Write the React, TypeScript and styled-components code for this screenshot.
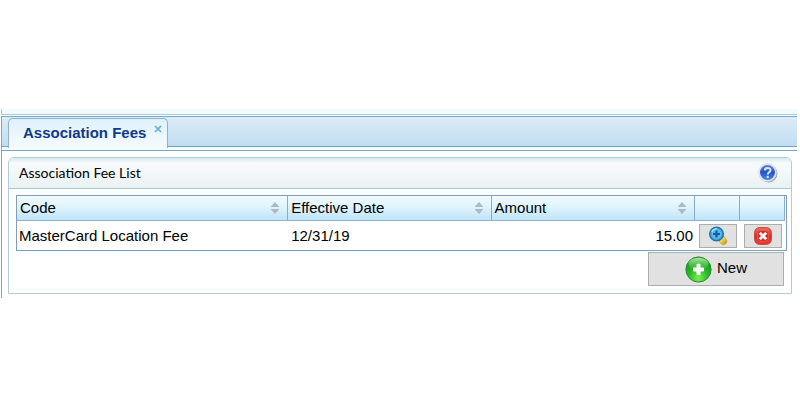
import React from "react";
import styled, { createGlobalStyle } from "styled-components";

const GlobalStyle = createGlobalStyle`
  *, *::before, *::after { box-sizing: border-box; }
  body {
    margin: 0;
    background: #fff;
    color: #000;
    font: 15px/18px "Liberation Sans", Arial, sans-serif;
  }
`;

const Page = styled.main`
  padding: 109px 3px 0 1px;
`;

const UpperPane = styled.div`
  height: 6px;
  margin-bottom: 1px;
  background: #f0faff;
  border-left: 1px solid #a3cbd9;
  border-bottom: 1px solid #a3cbd9;
`;

const TabPanel = styled.section`
  border: 1px solid #7ba7c7;
  border-width: 1px 0 0 1px;
`;

const TabStrip = styled.div`
  display: flex;
  height: 30px;
  padding: 1px 6px 0;
  background: linear-gradient(#dcebf7, #c0def1);
  border-bottom: 1px solid #6ea3c9;
`;

const Tab = styled.div`
  display: flex;
  align-items: flex-start;
  gap: 8px;
  height: 30px;
  padding: 0 5px 0 14px;
  background: linear-gradient(#dff1fd, #f5fbff);
  border: 1px solid #8db2ca;
  border-bottom: 0;
  border-radius: 5px 5px 0 0;
`;

const TabLabel = styled.button`
  padding: 5px 0;
  border: 0;
  background: none;
  color: #103a87;
  font: bold 15px/18px "Liberation Sans", Arial, sans-serif;
`;

const CloseButton = styled.button`
  display: flex;
  padding: 6px 0 0;
  border: 0;
  background: none;
`;

const StripFoot = styled.div`
  height: 4px;
  background: #f5fbff;
  border-bottom: 1px solid #7ba7c7;
`;

const TabBody = styled.div`
  padding: 6px 5px 4px 6px;
`;

const Panel = styled.section`
  border: 1px solid #b0cad6;
  border-radius: 6px 6px 0 0;
`;

const PanelHeader = styled.header`
  display: flex;
  align-items: center;
  justify-content: space-between;
  height: 31px;
  padding: 0 13px 0 10px;
  background: linear-gradient(#d9eaed, #f6fafb 5px, #f5f9fa 12px, #e9f1f3);
  border-bottom: 1px solid #a9c8d5;
  border-radius: 5px 5px 0 0;
`;

const PanelTitle = styled.h2`
  margin: 0;
  font: 14px/18px Lato, sans-serif;
`;

const HelpButton = styled.button`
  display: flex;
  padding: 0;
  border: 0;
  background: none;
`;

const PanelBody = styled.div`
  display: flex;
  flex-direction: column;
  align-items: flex-end;
  padding: 6px 4px 7px 7px;
`;

const TableFrame = styled.div`
  width: 100%;
  padding-right: 1px;
  border: 1px solid #7e9dc0;
`;

const Table = styled.table`
  width: 100%;
  table-layout: fixed;
  border-collapse: separate;
  border-spacing: 0;
`;

const Column = styled.col<{ $width: string }>`
  width: ${(p) => p.$width};
`;

const HeadCell = styled.th`
  height: 25px;
  padding: 0 7px 0 3px;
  background: linear-gradient(#f0fbff, #dff4fe 45%, #bfe3f8);
  border-right: 1px solid #8aa9cb;
  border-bottom: 1px solid #8eafcd;
  font-weight: normal;
  text-align: left;
`;

const HeadContent = styled.div`
  display: flex;
  align-items: center;
  justify-content: space-between;
`;

const Cell = styled.td<{ $align?: "right" | "center" }>`
  height: 29px;
  padding: ${(p) => (p.$align === "center" ? "0" : "0 2px")};
  text-align: ${(p) => p.$align ?? "left"};
`;

const DateCell = styled(Cell)`
  padding-left: 3px;
`;

const RowButton = styled.button`
  display: flex;
  align-items: center;
  justify-content: center;
  width: 38px;
  height: 24px;
  margin: 0 auto;
  padding: 0;
  background: #e1e1e1;
  border: 1px solid #adadad;
`;

const NewButton = styled.button`
  display: flex;
  align-items: center;
  justify-content: center;
  gap: 5px;
  width: 136px;
  height: 34px;
  margin: 1px 3px 0 0;
  padding: 0;
  background: #e1e1e1;
  border: 1px solid #adadad;
  color: #000;
  font: 15px/18px "Liberation Sans", Arial, sans-serif;
`;

const NewLabel = styled.span`
  padding-bottom: 2px;
`;

const SortIcon = () => (
  <svg width="10" height="12" viewBox="0 0 10 12" aria-hidden="true">
    <path d="M5 0 9.500 5H.5zM.5 7h9L5 12z" fill="#adb9c8" />
  </svg>
);

const CloseIcon = () => (
  <svg width="8" height="8" viewBox="0 0 8 8" aria-hidden="true">
    <path d="M1 1l6 6M7 1L1 7" stroke="#63aedb" strokeWidth="1.7" />
  </svg>
);

const HelpIcon = () => (
  <svg width="20" height="20" viewBox="0 0 20 20" aria-hidden="true">
    <defs>
      <linearGradient id="helpBlue" x2="0" y2="1">
        <stop stopColor="#557fdd" />
        <stop offset=".5" stopColor="#2457c5" />
        <stop offset="1" stopColor="#4285ed" />
      </linearGradient>
    </defs>
    <circle cx="10.500" cy="10.500" r="9" fill="#9ca2a9" />
    <circle cx="9.500" cy="9.500" r="9" fill="#e6ebf2" stroke="#cbd3df" strokeWidth=".6" />
    <circle cx="9.500" cy="9.500" r="7.500" fill="url(#helpBlue)" />
    <path d="M6.800 7.400C7 4.100 12.600 4.200 12.500 7.200c0 2-2.800 2-2.800 4.200" fill="none" stroke="#dce5f8" strokeWidth="2" />
    <circle cx="9.700" cy="13.900" r="1.200" fill="#dce5f8" />
  </svg>
);

const ViewIcon = () => (
  <svg width="20" height="20" viewBox="0 0 20 20" aria-hidden="true">
    <defs>
      <radialGradient id="lens">
        <stop stopColor="#3ba4e0" />
        <stop offset=".6" stopColor="#62c0ee" />
        <stop offset="1" stopColor="#2381c4" />
      </radialGradient>
      <linearGradient id="handle" x2="1" y2="1">
        <stop stopColor="#fff08b" />
        <stop offset=".5" stopColor="#f2cf38" />
        <stop offset="1" stopColor="#b18720" />
      </linearGradient>
    </defs>
    <path d="M10.500 14.500l5-4.500 2.800 3.500c2 3-2.300 7-5 4.500z" fill="url(#handle)" stroke="#ba962e" strokeWidth=".6" />
    <path d="M10.500 14.500l5-4.500" stroke="#7d8288" strokeWidth="1.200" />
    <circle cx="8.500" cy="8" r="6.900" fill="url(#lens)" stroke="#2374b0" strokeWidth="1.300" />
    <path d="M8.500 4.500v7M5 8h7" stroke="#125f9d" strokeWidth="2.200" />
    <path d="M3.800 6c1-2.300 3-3.400 5-3.400" fill="none" stroke="#a9e2fa" strokeWidth="1.200" />
  </svg>
);

const DeleteIcon = () => (
  <svg width="18" height="18" viewBox="0 0 18 18" aria-hidden="true">
    <defs>
      <linearGradient id="deleteRed" x2="0" y2="1">
        <stop stopColor="#f46d5b" />
        <stop offset=".5" stopColor="#da3029" />
        <stop offset="1" stopColor="#e93c32" />
      </linearGradient>
    </defs>
    <rect x=".6" y=".6" width="16.800" height="16.800" rx="5" fill="url(#deleteRed)" stroke="#c5453c" />
    <rect x="3.800" y="3.800" width="10.400" height="10.400" rx="2" fill="#c9231f" stroke="#ee695a" strokeWidth=".8" />
    <path d="M5.700 5.700l6.600 6.600M12.300 5.700l-6.600 6.600" stroke="#fff0eb" strokeWidth="3" />
  </svg>
);

const AddIcon = () => (
  <svg width="27" height="27" viewBox="0 0 27 27" aria-hidden="true">
    <defs>
      <radialGradient id="addGreen" cx=".5" cy=".85" r=".8">
        <stop stopColor="#7bed55" />
        <stop offset=".5" stopColor="#28b926" />
        <stop offset="1" stopColor="#11941b" />
      </radialGradient>
      <linearGradient id="addShine" x2="0" y2="1">
        <stop stopColor="#c9f5c0" stopOpacity=".85" />
        <stop offset="1" stopColor="#54cc48" stopOpacity=".2" />
      </linearGradient>
    </defs>
    <circle cx="13.500" cy="13.500" r="12.600" fill="url(#addGreen)" stroke="#2c8c30" />
    <ellipse cx="13.500" cy="8" rx="10" ry="6.200" fill="url(#addShine)" />
    <path d="M12.500 7.800h2q1 0 1 1v2.700H18q1 0 1 1v2q0 1-1 1h-2.500v2.700q0 1-1 1h-2q-1 0-1-1v-2.700H9q-1 0-1-1v-2q0-1 1-1h2.500V8.800q0-1 1-1z" fill="#fff" />
  </svg>
);

const columns = ["Code", "Effective Date", "Amount"];
const fees = [{ code: "MasterCard Location Fee", date: "12/31/19", amount: "15.00" }];

export default function App() {
  return (
    <>
      <GlobalStyle />
      <Page>
        <UpperPane />
        <TabPanel>
          <TabStrip>
            <Tab>
              <TabLabel type="button">Association Fees</TabLabel>
              <CloseButton type="button" aria-label="Close tab"><CloseIcon /></CloseButton>
            </Tab>
          </TabStrip>
          <StripFoot />
          <TabBody>
            <Panel>
              <PanelHeader>
                <PanelTitle>Association Fee List</PanelTitle>
                <HelpButton type="button" aria-label="Help"><HelpIcon /></HelpButton>
              </PanelHeader>
              <PanelBody>
                <TableFrame>
                  <Table>
                    <colgroup>
                      <Column $width="40%" />
                      <Column $width="30%" />
                      <Column $width="30%" />
                      <Column $width="45px" />
                      <Column $width="45px" />
                    </colgroup>
                    <thead>
                      <tr>
                        {columns.map((name) => (
                          <HeadCell key={name} scope="col">
                            <HeadContent>{name}<SortIcon /></HeadContent>
                          </HeadCell>
                        ))}
                        <HeadCell aria-label="View" />
                        <HeadCell aria-label="Delete" />
                      </tr>
                    </thead>
                    <tbody>
                      {fees.map((fee) => (
                        <tr key={fee.code}>
                          <Cell>{fee.code}</Cell>
                          <DateCell>{fee.date}</DateCell>
                          <Cell $align="right">{fee.amount}</Cell>
                          <Cell $align="center">
                            <RowButton type="button" aria-label="View fee"><ViewIcon /></RowButton>
                          </Cell>
                          <Cell $align="center">
                            <RowButton type="button" aria-label="Delete fee"><DeleteIcon /></RowButton>
                          </Cell>
                        </tr>
                      ))}
                    </tbody>
                  </Table>
                </TableFrame>
                <NewButton type="button"><AddIcon /><NewLabel>New</NewLabel></NewButton>
              </PanelBody>
            </Panel>
          </TabBody>
        </TabPanel>
      </Page>
    </>
  );
}
